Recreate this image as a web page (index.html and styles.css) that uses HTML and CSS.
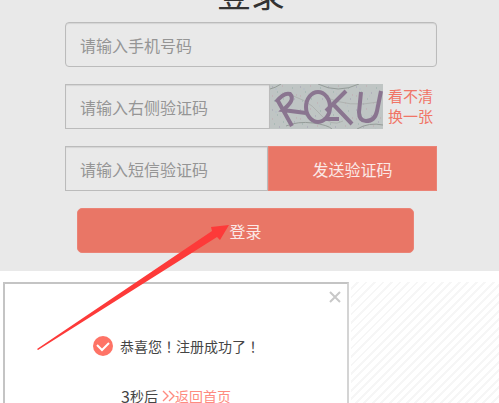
FILE: index.html
```
<!DOCTYPE html>
<html lang="zh-CN">

<head>
  <meta charset="UTF-8">
  <meta name="viewport" content="width=device-width, initial-scale=1.0">
  <title>登录</title>
  <link rel="stylesheet" href="styles.css">
</head>

<body>
  <!-- Login form -->
  <section class="login">
    <h1 class="login-title">登录</h1>
    <form class="login-form">
      <div class="row">
        <input class="field rounded" type="tel" placeholder="请输入手机号码" aria-label="手机号码">
      </div>

      <div class="row">
        <input class="field" type="text" placeholder="请输入右侧验证码" aria-label="右侧验证码">
        <svg class="captcha" viewBox="0 0 113 45" role="img" aria-label="验证码">
          <defs>
            <pattern id="noise" width="28" height="23" patternUnits="userSpaceOnUse">
              <g opacity=".55">
                <path d="M2 3h1M17 9h1M9 20h1M24 15h1" stroke="#8a7ba8" />
                <path d="M7 8h1M22 4h1M13 15h1M4 17h1" stroke="#6f9b90" />
                <path d="M12 2h1M26 11h1M19 19h1M2 12h1" stroke="#c08b9c" />
                <path d="M5 5h2M15 12h1M21 22h1M10 10h1" stroke="#aab4cc" />
              </g>
            </pattern>
          </defs>
          <rect width="113" height="45" fill="#bfc5c4" />
          <rect width="113" height="45" fill="url(#noise)" />
          <g fill="none" stroke="#959c99">
            <path d="M0 5Q5 4 11 0M48 0Q68 10 89 0" />
            <path d="M16 42Q28 37 43 39T62 45M87 45Q99 38 113 41" />
            <path d="M12 9Q37 14 49 29T73 37M55 13Q79 24 108 18" stroke="#aeb2b0" />
          </g>
          <g fill="none" stroke="#8a7590" stroke-width="4">
            <path d="M22 42L8 17M6 18Q14 8 20 10C25 15 19 21 13 26L36 29" />
            <ellipse cx="48" cy="23" rx="12" ry="15" />
            <path d="M56 35L69 35M56 27L76 7M63 20L82 40" />
            <path d="M91 8L89 28Q89 37 96 37Q105 37 107 27L111 7" />
          </g>
        </svg>
        <a class="refresh" href="#">看不清<br>换一张</a>
      </div>

      <div class="row">
        <input class="field" type="text" placeholder="请输入短信验证码" aria-label="短信验证码">
        <button class="btn send" type="button">发送验证码</button>
      </div>

      <button class="btn submit" type="submit">登录</button>
    </form>
  </section>

  <!-- Result panel -->
  <section class="result">
    <div class="dialog" role="dialog" aria-label="注册成功">
      <button class="close" type="button" aria-label="关闭">
        <svg width="12" height="12" viewBox="0 0 12 12">
          <path d="M1 1L11 11M11 1L1 11" fill="none" stroke="#c8c8c8" stroke-width="2" />
        </svg>
      </button>
      <p class="message">
        <svg class="check" width="20" height="20" viewBox="0 0 20 20">
          <circle cx="10" cy="10" r="10" fill="#fe7366" />
          <path d="M4 9L9 14L16 7" fill="none" stroke="#fff" stroke-width="2" />
        </svg>
        <span>恭喜您<span class="mark" lang="zh-TW">！</span>注册成功了<span class="mark" lang="zh-TW">！</span></span>
      </p>
      <p class="countdown">
        <span class="seconds">3</span>秒后
        <a class="home" href="#">
          <svg width="13" height="12" viewBox="0 0 13 12">
            <path d="M1 1L6 6L1 11M7 1L12 6L7 11" fill="none" stroke="currentColor" stroke-width="1.4" />
          </svg>返回首页</a>
      </p>
    </div>
    <div class="stripes"></div>
  </section>

  <!-- Arrow pointing at the login button -->
  <svg class="arrow" width="194" height="126" viewBox="0 0 194 126">
    <path d="M0 125L175 7L174 3L192 1L183 16L180 13L1 126Z" fill="#fd3a39" />
  </svg>
</body>

</html>
```
FILE: styles.css
```
* {
  box-sizing: border-box;
}

body {
  display: flex;
  flex-direction: column;
  height: 100vh;
  margin: 0;
  overflow: hidden;
  background-color: #fff;
  color: #444;
  font-family: "Noto Sans CJK SC", sans-serif;
  font-size: 14px;
}

a {
  text-decoration: none;
}

.login {
  flex: none;
  padding: 0 62px 18px 65px;
  background-color: #e9e9e9;
}

.login-title {
  margin: -25px 0 11px;
  color: #333;
  font-size: 34px;
  font-weight: 400;
  line-height: 36px;
  text-align: center;
}

.login-form {
  display: flex;
  flex-direction: column;
  gap: 17px;
}

.row {
  display: flex;
  height: 45px;
}

.field {
  flex: 1;
  min-width: 0;
  padding: 0 14px;
  border: 1px solid #bbb;
  border-radius: 0;
  background-color: transparent;
  box-shadow: inset 0 1px 1px #d4d4d4;
  font-family: inherit;
  font-size: 16px;
}

.field::placeholder {
  color: #959595;
}

.rounded {
  border-radius: 4px;
}

.captcha {
  width: 113px;
  height: 45px;
}

.refresh {
  width: 54px;
  padding: 2px 0 0 5px;
  color: #f07567;
  font-size: 15px;
  line-height: 20px;
}

.btn {
  height: 45px;
  border: 1px solid #eb8376;
  background-color: #e97666;
  color: #fbe9e7;
  font-family: inherit;
  font-size: 16px;
}

.send {
  width: 169px;
}

.submit {
  margin: 0 23px 0 12px;
  border-radius: 5px;
}

.result {
  display: flex;
  flex: 1;
  gap: 2px;
  padding: 11px 0 0 3px;
}

.dialog {
  position: relative;
  width: 346px;
  padding: 52px 0 0 88px;
  border: 2px solid #c4c4c4;
  border-right-color: #d4d4d4;
  border-bottom: 0;
}

.close {
  position: absolute;
  top: 6px;
  right: 5px;
  display: flex;
  padding: 1px;
  border: 0;
  background: none;
}

.message {
  display: flex;
  align-items: center;
  gap: 7px;
  margin: 0;
  line-height: 20px;
}

/* Centred full-width punctuation */
.mark {
  font-family: "Noto Sans CJK TC", sans-serif;
}

.countdown {
  display: flex;
  align-items: center;
  margin: 30px 0 0 28px;
  line-height: 20px;
}

.seconds {
  font-size: 16px;
}

.home {
  display: flex;
  align-items: center;
  margin-left: 4px;
  color: #fe8b80;
}

.stripes {
  flex: 1;
  background: repeating-linear-gradient(135deg, #fff 0 4px, #f6f6f6 4px 6px);
}

.arrow {
  position: absolute;
  top: 224px;
  left: 37px;
}
```
